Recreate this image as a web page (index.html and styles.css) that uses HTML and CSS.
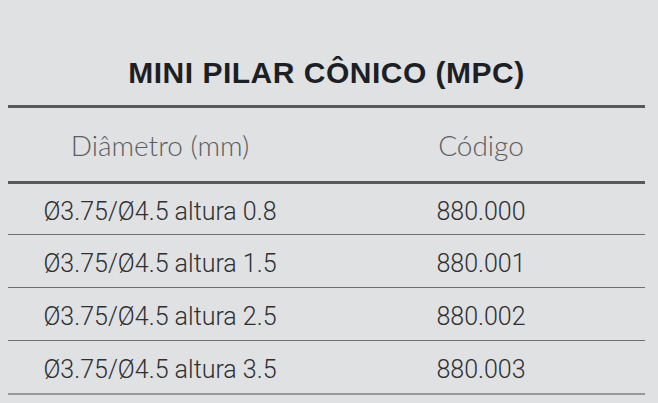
FILE: index.html
```html
<!DOCTYPE html>
<html lang="pt">
<head>
<meta charset="utf-8">
<title>Mini Pilar Cônico (MPC)</title>
<link rel="stylesheet" href="styles.css">
</head>
<body>
<div class="sheet">
  <h1 class="title">MINI PILAR CÔNICO (MPC)</h1>
  <div class="table">
    <div class="row head">
      <div class="cell left">Diâmetro (mm)</div>
      <div class="cell right">Código</div>
    </div>
    <div class="row item first">
      <div class="cell left">Ø3.75/Ø4.5 altura 0.8</div>
      <div class="cell right">880.000</div>
    </div>
    <div class="row item">
      <div class="cell left">Ø3.75/Ø4.5 altura 1.5</div>
      <div class="cell right">880.001</div>
    </div>
    <div class="row item">
      <div class="cell left">Ø3.75/Ø4.5 altura 2.5</div>
      <div class="cell right">880.002</div>
    </div>
    <div class="row item last">
      <div class="cell left">Ø3.75/Ø4.5 altura 3.5</div>
      <div class="cell right">880.003</div>
    </div>
  </div>
</div>
</body>
</html>
```

FILE: styles.css
```css
html, body {
  margin: 0;
  padding: 0;
  background: #e0e1e3;
}

.sheet {
  width: 637px;
  padding: 56px 0 0 8px;
}

.title {
  margin: 0;
  height: 49px;
  font-family: "Liberation Sans", Arial, sans-serif;
  font-weight: 700;
  font-size: 30px;
  line-height: 34px;
  letter-spacing: 0.5px;
  text-align: center;
  color: #1c1f23;
}

.table {
  border-top: 3px solid #58595b;
}

.row {
  display: grid;
  grid-template-columns: 304px 1fr;
  align-items: center;
}

.cell {
  text-align: center;
  white-space: nowrap;
}

.cell.right {
  padding-left: 5px;
}

.head {
  box-sizing: border-box;
  height: 76px;
  border-bottom: 3px solid #58595b;
  padding-top: 1px;
  font-family: Lato, "Open Sans", sans-serif;
  font-weight: 300;
  font-size: 28px;
  color: #5c5d5f;
}

.item {
  box-sizing: border-box;
  height: 53px;
  border-bottom: 1px solid #6e6f71;
  padding-top: 4px;
  font-family: Roboto, "Liberation Sans", sans-serif;
  font-weight: 300;
  font-size: 25px;
  color: #2e2f31;
}

.item.first {
  height: 51px;
}

.item.last {
  height: 54px;
  border-bottom: 2px solid #97989a;
}
```
